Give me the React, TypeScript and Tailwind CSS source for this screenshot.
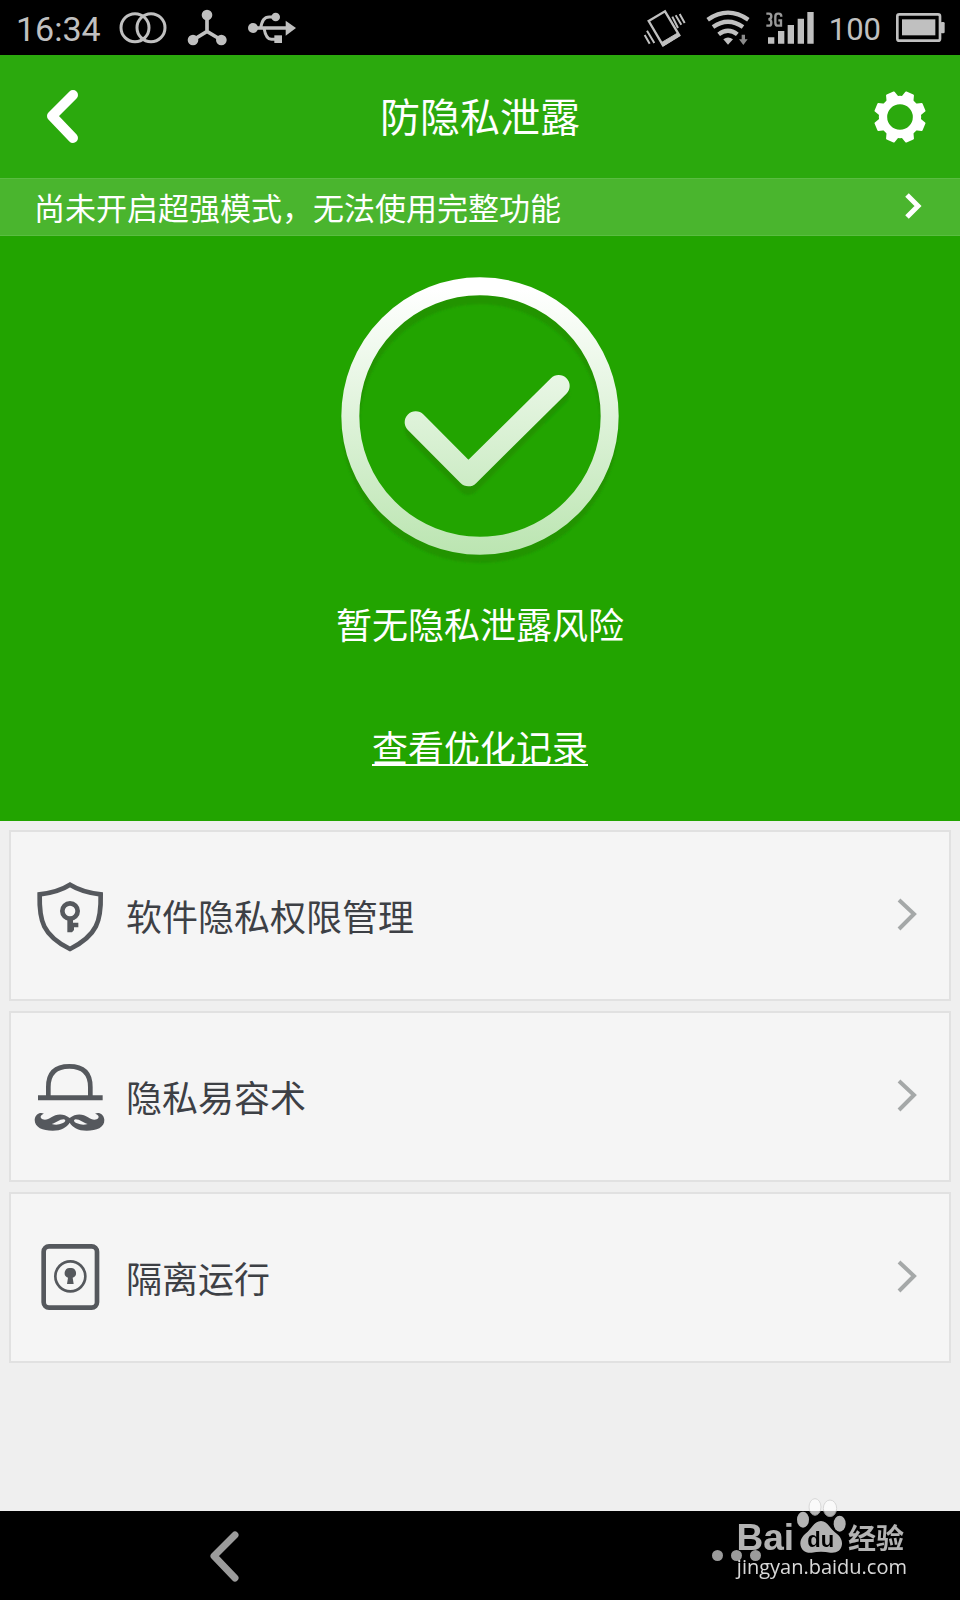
import type { ReactNode } from "react";

function StatusBar() {
  return (
    <div className="flex h-[55px] items-center justify-between bg-black pr-[15px] pl-4 font-['Roboto',sans-serif] text-[#c0c0c0]">
      <div className="flex items-center gap-5">
        <time className="-mr-0.5 pt-1 text-[34px] leading-[51px]">16:34</time>
        <svg viewBox="357 0 144 165" className="h-[55px] w-12" fill="none" stroke="currentColor" strokeWidth="9" aria-hidden="true">
          <circle cx="405" cy="83" r="42" />
          <circle cx="453" cy="83" r="42" />
        </svg>
        <svg viewBox="561 0 123 165" className="h-[55px] w-[41px]" fill="currentColor" aria-hidden="true">
          <path d="M621 45V94M579 120L621 94L664 120" fill="none" stroke="currentColor" strokeWidth="11" />
          <circle cx="621" cy="45" r="16" />
          <circle cx="579" cy="120" r="16" />
          <circle cx="664" cy="120" r="16" />
        </svg>
        <svg viewBox="744 0 144 165" className="h-[55px] w-12" fill="currentColor" aria-hidden="true">
          <circle cx="759" cy="84" r="15" />
          <circle cx="827" cy="51" r="13" />
          <rect x="823" y="106" width="23" height="23" />
          <path d="M857 62L888 84L857 107Z" />
          <path d="M759 84H860" fill="none" stroke="currentColor" strokeWidth="11" />
          <path d="M782 84C786 62 792 51 808 51H825M792 84C796 108 802 118 814 118H828" fill="none" stroke="currentColor" strokeWidth="9" />
        </svg>
      </div>
      <div className="flex items-center gap-4">
        <svg viewBox="33 0 144 165" className="h-[55px] w-12" fill="none" stroke="currentColor" strokeWidth="7" aria-hidden="true">
          <path d="M53 63L102 34L145 106L96 136Z" />
          <path d="M91 128L140 99L146 107L96 138Z" fill="currentColor" strokeWidth="3" />
          <path d="M41 105L56 131M48 92L70 129M124 50L141 84M134 46L151 74M146 42L161 69" strokeWidth="6" />
        </svg>
        <svg viewBox="228 0 132 165" className="h-[55px] w-11" fill="none" stroke="currentColor" strokeWidth="13" aria-hidden="true">
          <path d="M233 59Q294 17 355 59M249 81Q294 49 339 81M266 103Q294 81 322 103" />
          <path d="M280 118Q294 107 309 118L294 134Z" fill="currentColor" stroke="none" />
          <path d="M335 104H345V118H353L340 135L327 118H335Z" fill="#8a8a8a" stroke="none" />
        </svg>
        <div className="flex items-center gap-[15px]">
          <svg viewBox="405 0 144 165" className="h-[55px] w-12" fill="currentColor" aria-hidden="true">
            <path d="M411 112H430V131H411ZM441 93H460V131H441ZM470 75H489V131H470ZM500 56H519V131H500ZM529 36H548V131H529Z" />
            <path d="M406 41H414Q421 41 421 49Q421 58 412 58Q421 58 421 68Q421 77 414 77H406M451 50Q451 41 443 41H441Q433 41 433 50V68Q433 77 441 77H450V61H442" fill="none" stroke="#999999" strokeWidth="7" />
          </svg>
          <span className="pt-1 text-[31px] leading-[51px]">100</span>
          <svg viewBox="798 0 147 165" className="h-[55px] w-[49px]" fill="currentColor" aria-hidden="true">
            <rect x="802" y="43" width="128" height="79" rx="6" fill="none" stroke="currentColor" strokeWidth="8" />
            <rect x="816" y="58" width="100" height="48" />
            <rect x="932" y="66" width="12" height="34" rx="4" />
          </svg>
        </div>
      </div>
    </div>
  );
}

const toothAngles = [22.5, 67.5, 112.5, 157.5, 202.5, 247.5, 292.5, 337.5];

function GearIcon() {
  return (
    <svg viewBox="-81 -81 162 162" className="size-[54px]" fill="white" aria-hidden="true">
      <circle r="51" fill="none" stroke="white" strokeWidth="25" />
      {toothAngles.map((angle) => (
        <path
          key={angle}
          d="M-17 -56L-11 -75H11L17 -56Z"
          stroke="white"
          strokeWidth="6"
          strokeLinejoin="round"
          transform={`rotate(${angle})`}
        />
      ))}
    </svg>
  );
}

function Header() {
  return (
    <header className="flex h-[123px] items-center justify-between bg-[#2ba90d] px-[30px]">
      <button type="button" aria-label="返回" className="flex w-[60px] justify-center">
        <svg viewBox="0 0 60 60" className="size-[60px]" fill="none" stroke="white" strokeWidth="10" strokeLinecap="round" strokeLinejoin="round" aria-hidden="true">
          <path d="M43 8L22 29L43 51" />
        </svg>
      </button>
      <h1 className="pb-1 text-[40px] leading-[60px] text-white">防隐私泄露</h1>
      <button type="button" aria-label="设置" className="flex w-[60px] justify-center">
        <GearIcon />
      </button>
    </header>
  );
}

function Banner() {
  return (
    <button type="button" className="flex h-[58px] w-full items-center justify-between border-y border-[#5abd41] bg-[#4ab52e] pr-[33px] pl-[34px] text-left text-white">
      <span className="text-[31px] leading-[54px]">尚未开启超强模式，无法使用完整功能</span>
      <svg viewBox="0 0 30 30" className="size-[30px]" fill="none" stroke="white" strokeWidth="5" aria-hidden="true">
        <path d="M10 3L21 14L10 25" />
      </svg>
    </button>
  );
}

function CheckBadge() {
  return (
    <svg viewBox="0 0 960 960" className="size-80" fill="none" strokeLinecap="round" strokeLinejoin="round" aria-hidden="true">
      <defs>
        <linearGradient id="badge" gradientUnits="userSpaceOnUse" x1="0" y1="90" x2="0" y2="884">
          <stop offset="0" stopColor="#ffffff" />
          <stop offset="1" stopColor="#bbe5b1" />
        </linearGradient>
        <filter id="soft" x="-10%" y="-10%" width="120%" height="120%">
          <feGaussianBlur stdDeviation="3" />
        </filter>
      </defs>
      <g stroke="#209400" filter="url(#soft)">
        <circle cx="480" cy="494" r="388" strokeWidth="54" />
        <path d="M287 512L445 673L716 402" strokeWidth="64" />
      </g>
      <g stroke="url(#badge)">
        <circle cx="480" cy="468" r="389" strokeWidth="54" />
        <path d="M287 487L445 646L716 378" strokeWidth="66" />
      </g>
    </svg>
  );
}

function Hero() {
  return (
    <section className="flex flex-col items-center bg-[#22a400] pt-6 pb-12 text-4xl text-white">
      <CheckBadge />
      <p className="mt-4 leading-[54px]">暂无隐私泄露风险</p>
      <a href="#records" className="mt-[69px] leading-[54px] underline decoration-2 underline-offset-2">
        查看优化记录
      </a>
    </section>
  );
}

function ShieldIcon() {
  return (
    <svg viewBox="102 178 216 216" className="size-18" fill="none" stroke="currentColor" strokeWidth="14" aria-hidden="true">
      <path d="M210 192Q245 214 302 221C304 300 292 344 210 385C128 344 117 300 119 221Q176 214 210 192Z" />
      <circle cx="210" cy="271" r="23" />
      <path d="M202 292H219V306H235V320H222V328L216 335H202Z" fill="currentColor" stroke="none" />
    </svg>
  );
}

function DisguiseIcon() {
  return (
    <svg viewBox="102 61 216 216" className="size-18" fill="none" stroke="currentColor" strokeWidth="14" aria-hidden="true">
      <path d="M145 168V139Q145 77 208 77Q271 77 271 139V168" />
      <path d="M114 171H308" strokeWidth="15" />
      <path
        fill="currentColor"
        fillRule="evenodd"
        stroke="none"
        d="M132 219C120 213 106 220 104 237C104 260 128 270 158 270C184 270 200 260 209 246C218 260 234 270 260 270C290 270 314 260 313 237C311 220 297 213 285 219C293 221 298 226 295 232C290 239 276 239 264 230C250 220 228 217 209 232C190 217 168 220 154 230C142 239 128 239 123 232C120 226 125 221 132 219ZM155 250C168 247 178 236 191 236C199 238 197 244 187 248C176 253 165 253 155 250ZM263 250C250 247 240 236 227 236C219 238 221 244 231 248C242 253 253 253 263 250Z"
      />
    </svg>
  );
}

function VaultIcon() {
  return (
    <svg viewBox="102 92 216 216" className="size-18" fill="none" stroke="currentColor" aria-hidden="true">
      <rect x="131" y="105" width="160" height="184" rx="16" strokeWidth="14" />
      <circle cx="211" cy="195" r="45" strokeWidth="8" />
      <path d="M211 170A15 15 0 0 1 218 199L221 218H201L204 199A15 15 0 0 1 211 170Z" fill="currentColor" stroke="none" />
    </svg>
  );
}

const entries: { label: string; icon: ReactNode }[] = [
  { label: "软件隐私权限管理", icon: <ShieldIcon /> },
  { label: "隐私易容术", icon: <DisguiseIcon /> },
  { label: "隔离运行", icon: <VaultIcon /> },
];

function EntryList() {
  return (
    <ul className="flex flex-col gap-[10px] p-[9px]">
      {entries.map(({ label, icon }) => (
        <li key={label}>
          <button type="button" className="flex h-[171px] w-full items-center gap-5 border-2 border-[#e1e1e1] bg-[#f5f5f5] px-[23px] text-left text-[#55585d]">
            {icon}
            <span className="flex-1 pb-0.5 text-4xl leading-[54px] text-[#3d4045]">{label}</span>
            <svg viewBox="0 0 36 36" className="size-9" fill="none" stroke="#a5a8a8" strokeWidth="4" aria-hidden="true">
              <path d="M9 2L24 16L9 31" />
            </svg>
          </button>
        </li>
      ))}
    </ul>
  );
}

function Watermark() {
  return (
    <div className="absolute right-[53px] bottom-[21px] flex flex-col items-end text-white">
      <div className="mr-[3px] mb-px flex items-end font-bold opacity-70">
        <span className="mr-[2px] font-['Liberation_Sans',sans-serif] text-[37px] leading-8">Bai</span>
        <svg viewBox="315 48 153 171" className="h-[57px] w-[51px]" fill="white" aria-hidden="true">
          <g stroke="#cccccc" strokeWidth="3">
            <ellipse cx="372" cy="78" rx="18" ry="25" />
            <ellipse cx="417" cy="82" rx="20" ry="25" />
          </g>
          <ellipse cx="336" cy="116" rx="18" ry="24" />
          <ellipse cx="446" cy="128" rx="18" ry="24" />
          <path d="M390 120C408 120 414 138 430 152C446 164 454 174 453 190C451 210 436 217 418 215C400 211 380 211 362 215C344 217 329 207 328 188C328 172 338 162 350 152C364 138 372 120 390 120Z" />
          <text x="389" y="197" textAnchor="middle" fontSize="66" className="fill-black font-['Liberation_Sans',sans-serif]">du</text>
        </svg>
        <span className="mb-[3px] ml-px text-[28px] leading-7">经验</span>
      </div>
      <div className="font-['Open_Sans',sans-serif] text-xl leading-6 opacity-85">jingyan.baidu.com</div>
    </div>
  );
}

function NavBar() {
  return (
    <nav className="relative mt-auto flex h-[89px] items-center justify-between bg-black px-[199px] text-[#9b9b9b]">
      <button type="button" aria-label="后退">
        <svg viewBox="0 0 50 60" className="h-[60px] w-[50px]" fill="none" stroke="currentColor" strokeWidth="7" strokeLinecap="round" strokeLinejoin="round" aria-hidden="true">
          <path d="M36 9L15 30L36 52" />
        </svg>
      </button>
      <button type="button" aria-label="更多" className="flex gap-2">
        <span className="size-[11px] rounded-full bg-current" />
        <span className="size-[11px] rounded-full bg-current" />
        <span className="size-[11px] rounded-full bg-current" />
      </button>
      <Watermark />
    </nav>
  );
}

export default function App() {
  return (
    <div className="flex min-h-screen flex-col bg-[#efefef] font-['Noto_Sans_CJK_SC',sans-serif]" lang="zh-CN">
      <StatusBar />
      <Header />
      <Banner />
      <main>
        <Hero />
        <EntryList />
      </main>
      <NavBar />
    </div>
  );
}
